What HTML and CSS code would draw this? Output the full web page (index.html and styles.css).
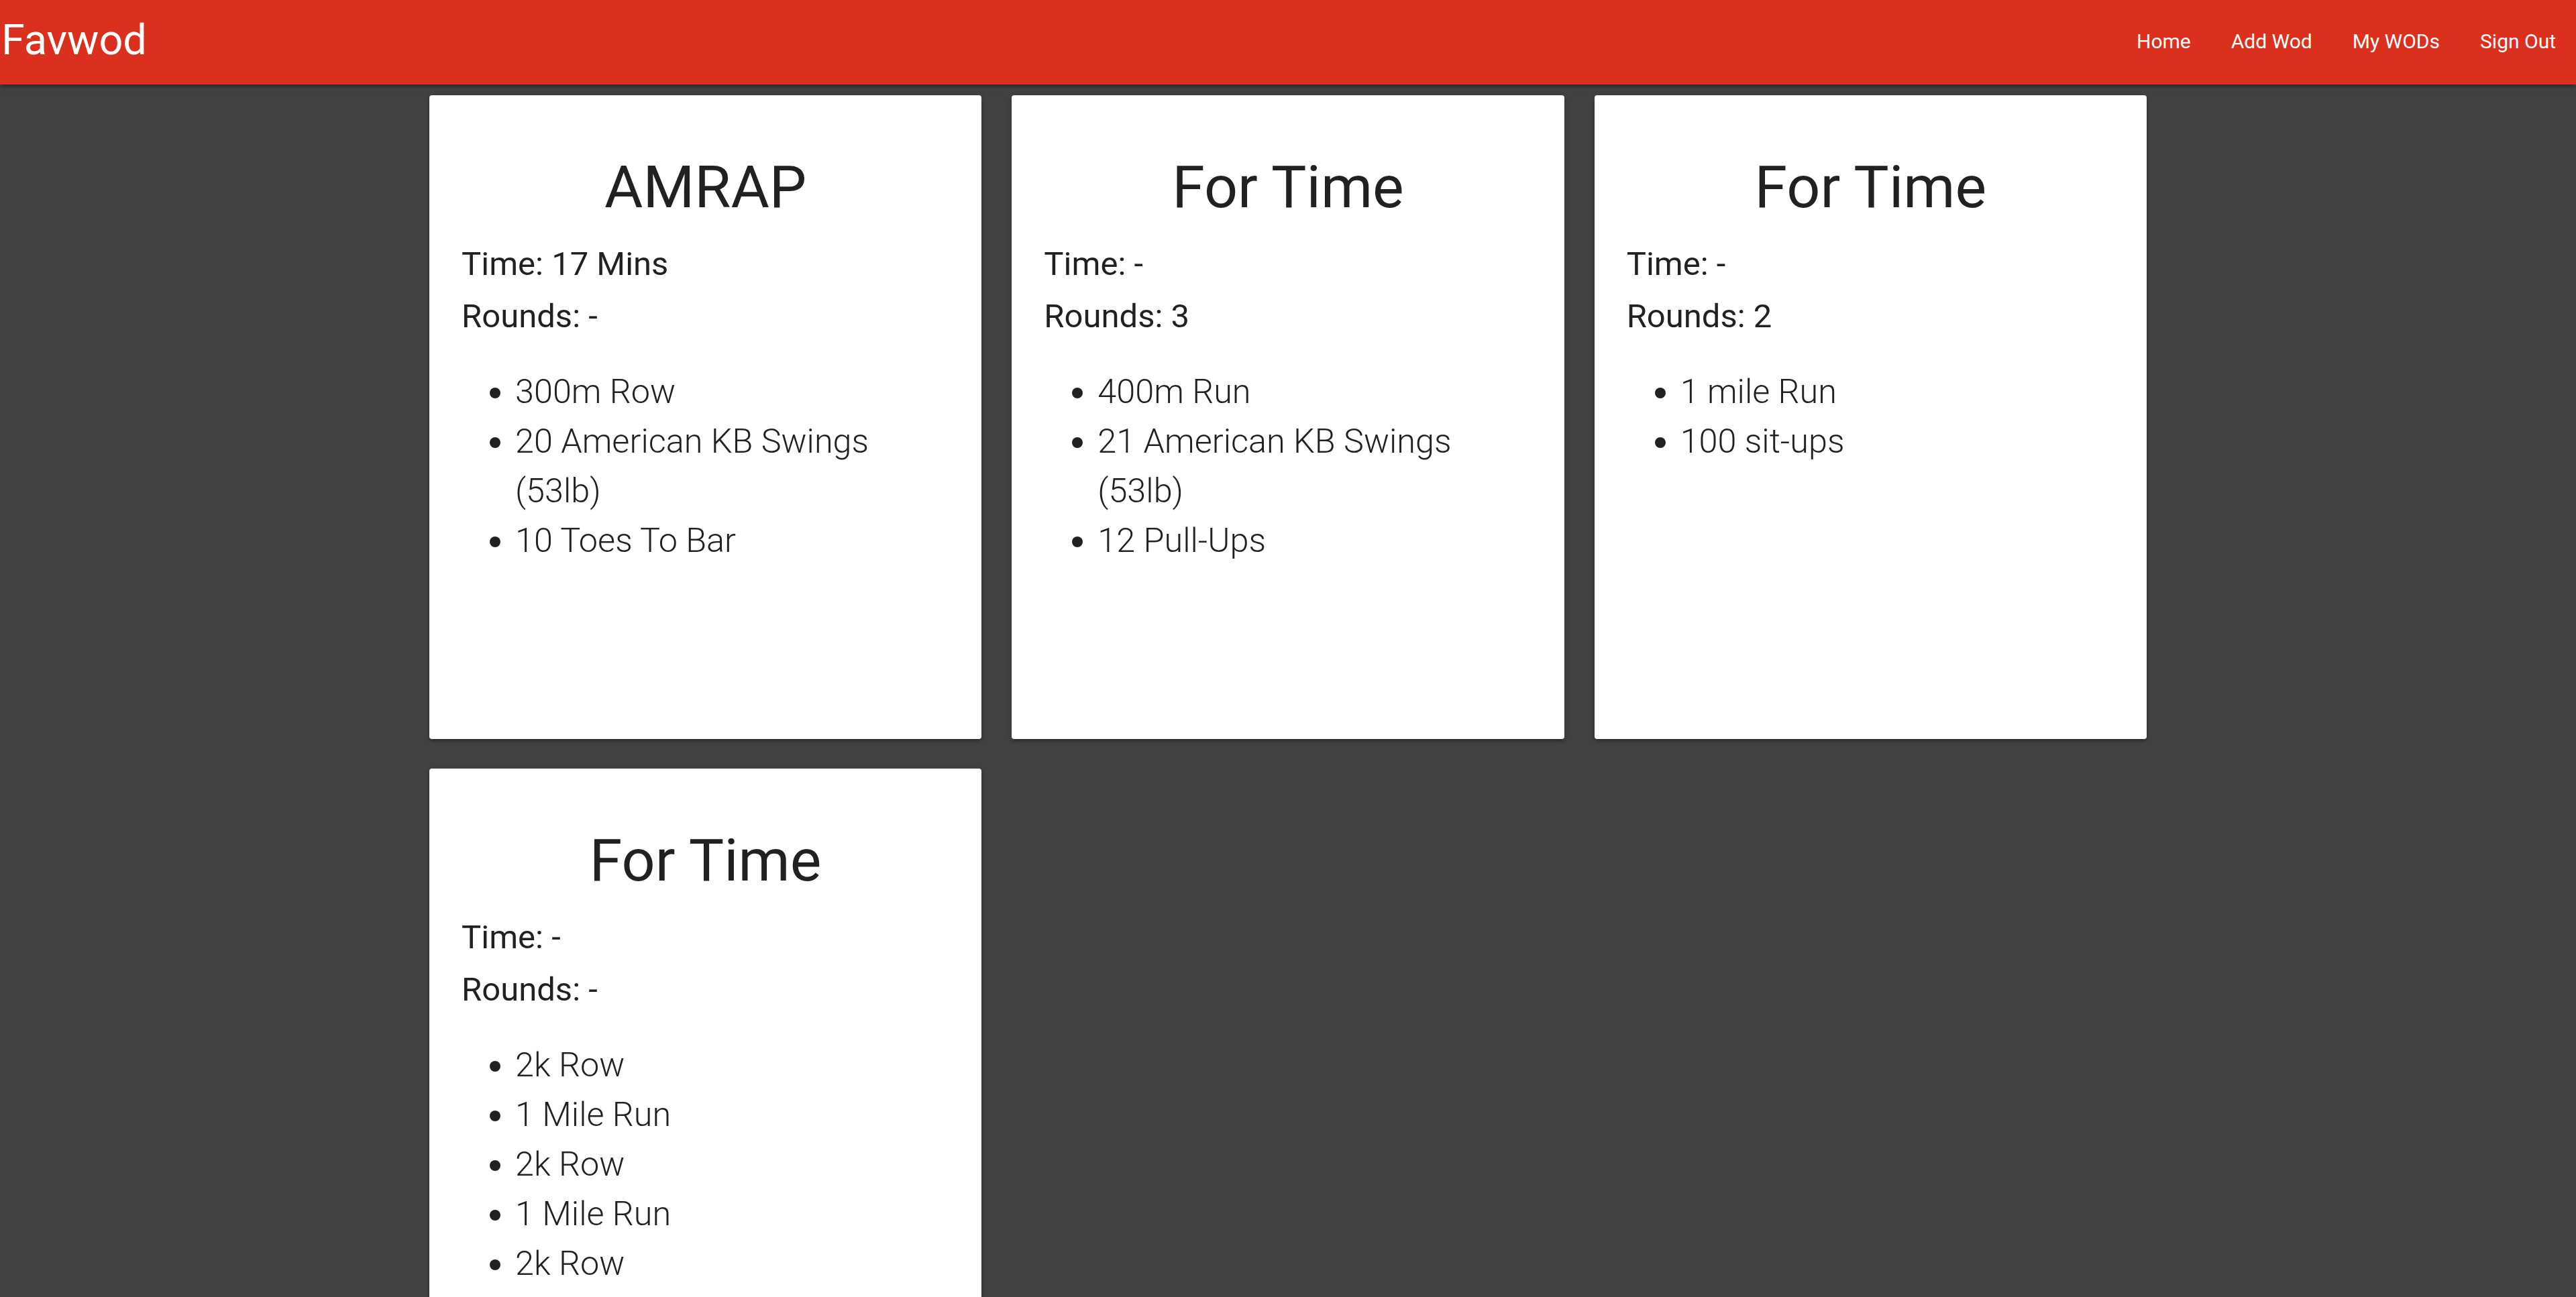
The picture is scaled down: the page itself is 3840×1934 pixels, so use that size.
FILE: index.html
```html
<!DOCTYPE html>
<html lang="en">
<head>
    <meta charset="UTF-8">
    <meta name="viewport" content="width=device-width, initial-scale=1.0">
    <title>Favwod</title>
    <link rel="stylesheet" href="styles.css">
</head>
<body>
    <nav class="navbar">
        <a href="#" class="brand">Favwod</a>
        <ul class="nav-links">
            <li><a href="#">Home</a></li>
            <li><a href="#">Add Wod</a></li>
            <li><a href="#">My WODs</a></li>
            <li><a href="#">Sign Out</a></li>
        </ul>
    </nav>

    <main class="container">
        <div class="wod-grid">
            <div class="card">
                <h2 class="wod-title">AMRAP</h2>
                <p class="wod-meta">Time: 17 Mins</p>
                <p class="wod-meta">Rounds: -</p>
                <ul class="wod-moves">
                    <li>300m Row</li>
                    <li>20 American KB Swings (53lb)</li>
                    <li>10 Toes To Bar</li>
                </ul>
            </div>

            <div class="card">
                <h2 class="wod-title">For Time</h2>
                <p class="wod-meta">Time: -</p>
                <p class="wod-meta">Rounds: 3</p>
                <ul class="wod-moves">
                    <li>400m Run</li>
                    <li>21 American KB Swings (53lb)</li>
                    <li>12 Pull-Ups</li>
                </ul>
            </div>

            <div class="card">
                <h2 class="wod-title">For Time</h2>
                <p class="wod-meta">Time: -</p>
                <p class="wod-meta">Rounds: 2</p>
                <ul class="wod-moves">
                    <li>1 mile Run</li>
                    <li>100 sit-ups</li>
                </ul>
            </div>

            <div class="card">
                <h2 class="wod-title">For Time</h2>
                <p class="wod-meta">Time: -</p>
                <p class="wod-meta">Rounds: -</p>
                <ul class="wod-moves">
                    <li>2k Row</li>
                    <li>1 Mile Run</li>
                    <li>2k Row</li>
                    <li>1 Mile Run</li>
                    <li>2k Row</li>
                </ul>
            </div>
        </div>
    </main>
</body>
</html>
```

FILE: styles.css
```css
* {
    margin: 0;
    padding: 0;
    box-sizing: border-box;
}

body {
    background-color: #424242;
    font-family: Roboto, "Noto Sans", sans-serif;
    color: rgba(0, 0, 0, 0.87);
}

a {
    color: white;
    text-decoration: none;
}

.navbar {
    display: flex;
    justify-content: space-between;
    align-items: flex-start;
    height: 126px;
    background-color: #da301d;
    box-shadow: 0 4px 4px 0 rgba(0,0,0,0.14), 0 6px 2px -4px rgba(0,0,0,0.12), 0 2px 10px 0 rgba(0,0,0,0.2);
    position: relative;
    z-index: 1;
}

.brand {
    font-size: 63px;
    line-height: 120px;
    padding-left: 2px;
}

.nav-links {
    display: flex;
    list-style: none;
}

.nav-links a {
    display: block;
    font-size: 30px;
    line-height: 124px;
    padding: 0 30px;
}

.container {
    width: 2560px;
    margin: 0 auto;
    padding-top: 16px;
}

.wod-grid {
    display: grid;
    grid-template-columns: repeat(3, 1fr);
    gap: 44px 45px;
}

.card {
    background-color: white;
    min-height: 960px;
    padding: 48px;
    border-radius: 4px;
    box-shadow: 0 4px 4px 0 rgba(0,0,0,0.14), 0 6px 2px -4px rgba(0,0,0,0.12), 0 2px 10px 0 rgba(0,0,0,0.2);
}

.wod-title {
    font-size: 88px;
    font-weight: 400;
    line-height: 1.1;
    text-align: center;
    margin: 41px 0 27px;
}

.wod-meta {
    font-size: 49px;
    line-height: 78.4px;
}

.wod-moves {
    margin-top: 35px;
    padding-left: 80px;
    list-style: disc;
}

.wod-moves li {
    font-size: 50.4px;
    font-weight: 300;
    line-height: 74px;
}
```
